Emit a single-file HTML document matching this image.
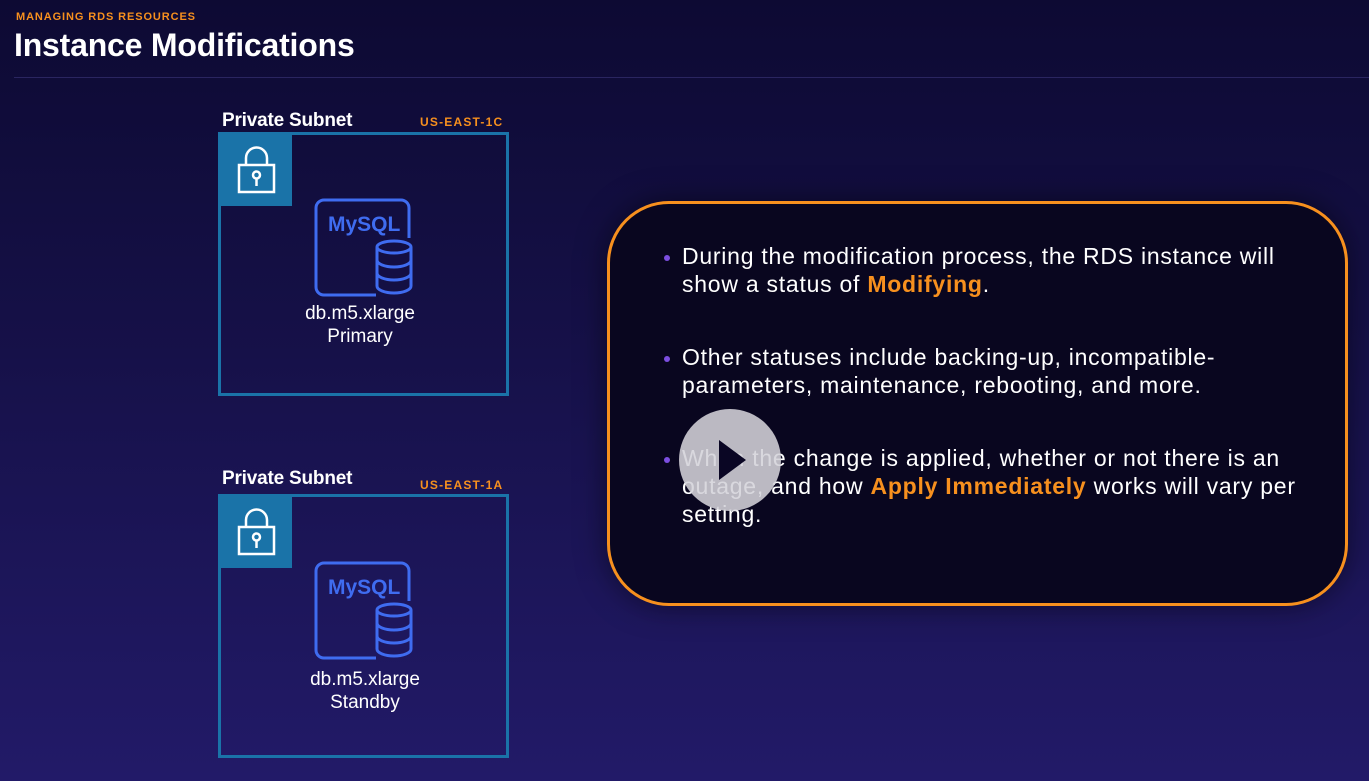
<!DOCTYPE html>
<html><head><style>
*{margin:0;padding:0;box-sizing:border-box}
body{width:1369px;height:781px;overflow:hidden;position:relative;font-family:"Liberation Sans",sans-serif;background:linear-gradient(180deg,#0d0a33 0%,#151046 40%,#221a68 100%);color:#fff}
.abs{position:absolute}
.kick{left:16px;top:11px;font-size:11px;font-weight:bold;color:#f7901e;letter-spacing:.9px}
.title{left:14px;top:27px;font-size:32px;font-weight:bold;letter-spacing:-.2px}
.rule{left:14px;top:77px;width:1355px;height:1px;background:#2a2560}
.lbl{font-size:19px;font-weight:bold;letter-spacing:-.2px}
.reg{font-size:12px;font-weight:bold;color:#f7901e;letter-spacing:1.2px}
.box{border:3px solid #1a73a8;width:291px;height:264px}
.lock{width:71px;height:71px;background:#1a73a8}
.cap{font-size:19px;text-align:center;width:200px;line-height:23px}
.call{left:607px;top:201px;width:741px;height:405px;border:3px solid #f7901e;border-radius:62px;background:#09061f;box-shadow:0 0 30px rgba(0,0,0,.5)}
.txt{left:682px;font-size:23px;line-height:28px;color:#fff;width:650px;white-space:nowrap;letter-spacing:.75px}
.txt b{color:#f7901e}
.dot{left:664px;width:6px;height:6px;border-radius:50%;background:#7c4ee0}
</style></head><body>
<div class="abs kick">MANAGING RDS RESOURCES</div>
<div class="abs title">Instance Modifications</div>
<div class="abs rule"></div>

<div class="abs lbl" style="left:222px;top:110px">Private Subnet</div>
<div class="abs reg" style="left:420px;top:115px">US-EAST-1C</div>
<div class="abs box" style="left:218px;top:132px"></div>
<div class="abs lock" style="left:221px;top:135px"><svg width="71" height="71"><path d="M25 30v-7a10.5 10.5 0 0 1 21 0v7" fill="none" stroke="#fff" stroke-width="2.5"/><rect x="18" y="30" width="35" height="27" fill="none" stroke="#fff" stroke-width="2.5"/><circle cx="35.5" cy="40" r="3.5" fill="none" stroke="#fff" stroke-width="2.5"/><path d="M35.5 44v7" stroke="#fff" stroke-width="2.5"/></svg></div>
<svg class="abs" style="left:314px;top:198px" width="100" height="100"><path d="M62 97H10a8 8 0 0 1-8-8V10a8 8 0 0 1 8-8h77a8 8 0 0 1 8 8v30" fill="none" stroke="#3f6cf0" stroke-width="3"/><text x="14" y="33" font-family="Liberation Sans" font-weight="bold" font-size="21" fill="#3f6cf0">MySQL</text><g fill="none" stroke="#3f6cf0" stroke-width="3"><ellipse cx="80" cy="49" rx="17" ry="6"/><path d="M63 49v39c0 4 8 7 17 7s17-3 17-7V49M63 62c0 4 8 7 17 7s17-3 17-7M63 75c0 4 8 7 17 7s17-3 17-7"/></g></svg>
<div class="abs cap" style="left:260px;top:302px">db.m5.xlarge<br>Primary</div>

<div class="abs lbl" style="left:222px;top:468px">Private Subnet</div>
<div class="abs reg" style="left:420px;top:478px">US-EAST-1A</div>
<div class="abs box" style="left:218px;top:494px"></div>
<div class="abs lock" style="left:221px;top:497px"><svg width="71" height="71"><path d="M25 30v-7a10.5 10.5 0 0 1 21 0v7" fill="none" stroke="#fff" stroke-width="2.5"/><rect x="18" y="30" width="35" height="27" fill="none" stroke="#fff" stroke-width="2.5"/><circle cx="35.5" cy="40" r="3.5" fill="none" stroke="#fff" stroke-width="2.5"/><path d="M35.5 44v7" stroke="#fff" stroke-width="2.5"/></svg></div>
<svg class="abs" style="left:314px;top:561px" width="100" height="100"><path d="M62 97H10a8 8 0 0 1-8-8V10a8 8 0 0 1 8-8h77a8 8 0 0 1 8 8v30" fill="none" stroke="#3f6cf0" stroke-width="3"/><text x="14" y="33" font-family="Liberation Sans" font-weight="bold" font-size="21" fill="#3f6cf0">MySQL</text><g fill="none" stroke="#3f6cf0" stroke-width="3"><ellipse cx="80" cy="49" rx="17" ry="6"/><path d="M63 49v39c0 4 8 7 17 7s17-3 17-7V49M63 62c0 4 8 7 17 7s17-3 17-7M63 75c0 4 8 7 17 7s17-3 17-7"/></g></svg>
<div class="abs cap" style="left:265px;top:668px">db.m5.xlarge<br>Standby</div>

<div class="abs call"></div>
<div class="abs dot" style="top:255px"></div>
<div class="abs txt" style="top:242px">During the modification process, the RDS instance will<br>show a status of <b>Modifying</b>.</div>
<div class="abs dot" style="top:356px"></div>
<div class="abs txt" style="top:343px">Other statuses include backing-up, incompatible-<br>parameters, maintenance, rebooting, and more.</div>
<div class="abs dot" style="top:457px"></div>
<div class="abs txt" style="top:444px">When the change is applied, whether or not there is an<br>outage, and how <b>Apply Immediately</b> works will vary per<br>setting.</div>
<svg class="abs" style="left:678px;top:408px" width="104" height="104"><circle cx="52" cy="52" r="51" fill="#d4d3da" fill-opacity=".88"/><path d="M41 32L68 52L41 72Z" fill="#0a0624"/></svg>
</body></html>
